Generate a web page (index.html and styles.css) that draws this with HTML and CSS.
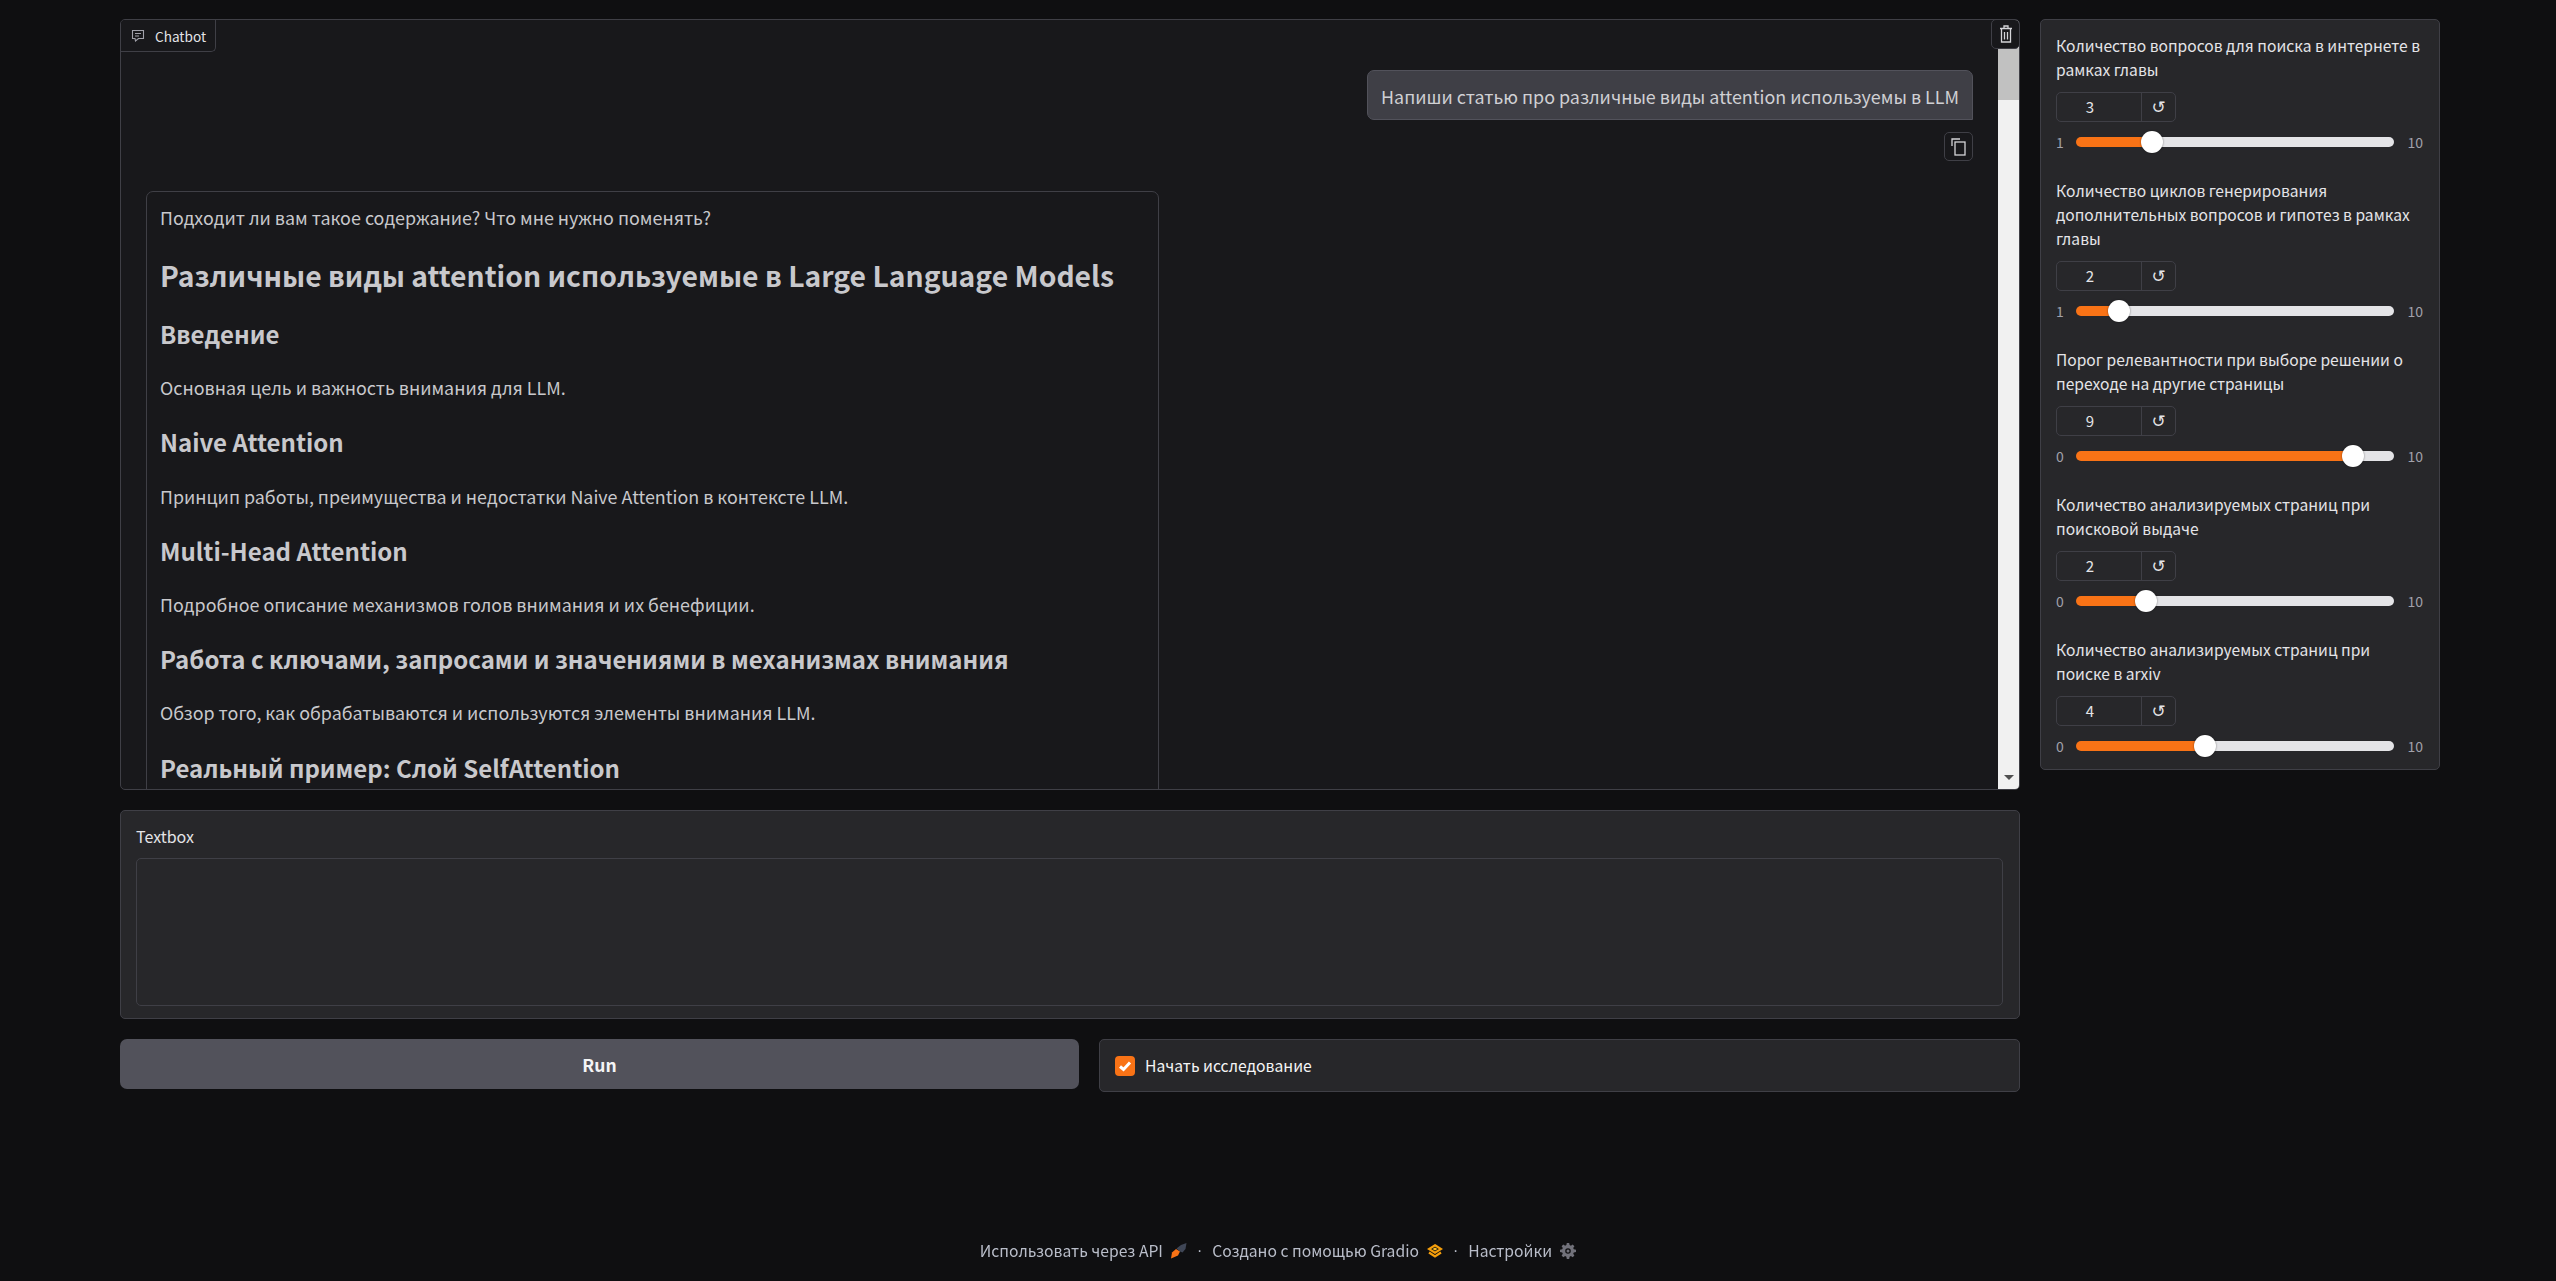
FILE: index.html
```html
<!doctype html>
<html lang="ru">
    <head>
        <meta charset="utf-8" />
        <meta name="viewport" content="width=device-width, initial-scale=1.0">
        <link rel="stylesheet" href="styles.css">
        <title>Gradio</title>
    </head>
    <body>
        <main class="app">
            <div class="left">
                <section class="chatbot">
                    <div class="chat-label">
                        <svg class="chat-icon" viewBox="0 0 14 14" fill="none" stroke="currentColor" stroke-width="1.1"><path d="M1.5 1.5h11v8h-5l-3 2.5-.5-2.500h-2.500z"/><path d="M4 4.500h6M4 7h4"/></svg>
                        <span>Chatbot</span>
                    </div>
                    <button class="icon-btn trash">
                        <svg viewBox="0 0 14 20" fill="none" stroke="currentColor" stroke-width="1.300"><path d="M1 4.500h12M5 4V2h4v2M2.500 5v13h9V5M5.500 8v7.500M8.500 8v7.500"/></svg>
                    </button>
                    <div class="chat-scroll">
                        <div class="user-row">
                            <div class="bubble">Напиши статью про различные виды attention используемы в LLM</div>
                        </div>
                        <div class="copy-row">
                            <button class="icon-btn copy">
                                <svg viewBox="0 0 16 18" fill="none" stroke="currentColor" stroke-width="1.300"><path d="M1 8V1h8"/><rect x="4" y="4" width="10" height="13"/></svg>
                            </button>
                        </div>
                        <article class="answer">
                            <p>Подходит ли вам такое содержание? Что мне нужно поменять?</p>
                            <h1>Различные виды attention используемые в Large Language Models</h1>
                            <h2>Введение</h2>
                            <p>Основная цель и важность внимания для LLM.</p>
                            <h2>Naive Attention</h2>
                            <p>Принцип работы, преимущества и недостатки Naive Attention в контексте LLM.</p>
                            <h2>Multi-Head Attention</h2>
                            <p>Подробное описание механизмов голов внимания и их бенефиции.</p>
                            <h2>Работа с ключами, запросами и значениями в механизмах внимания</h2>
                            <p>Обзор того, как обрабатываются и используются элементы внимания LLM.</p>
                            <h2>Реальный пример: Слой SelfAttention</h2>
                        </article>
                    </div>
                    <div class="scrollbar">
                        <div class="scroll-thumb"></div>
                        <div class="scroll-arrow"></div>
                    </div>
                </section>

                <section class="textbox">
                    <div class="field-label">Textbox</div>
                    <div class="textarea"></div>
                </section>

                <div class="actions">
                    <button class="run">Run</button>
                    <label class="check">
                        <span class="check-box">
                            <svg viewBox="0 0 20 20" fill="none" stroke="#fff" stroke-width="3"><path d="M5 10.500l3.500 3L15 6.500"/></svg>
                        </span>
                        <span>Начать исследование</span>
                    </label>
                </div>
            </div>

            <aside class="sliders">
                <div class="slider-block">
                    <div class="field-label">Количество вопросов для поиска в интернете в рамках главы</div>
                    <div class="number"><span class="value">3</span><span class="reset">↺</span></div>
                    <div class="range-row"><span>1</span><input type="range" min="1" max="10" value="3" style="--fill: 24%"><span>10</span></div>
                </div>
                <div class="slider-block">
                    <div class="field-label">Количество циклов генерирования дополнительных вопросов и гипотез в рамках главы</div>
                    <div class="number"><span class="value">2</span><span class="reset">↺</span></div>
                    <div class="range-row"><span>1</span><input type="range" min="1" max="10" value="2" style="--fill: 14%"><span>10</span></div>
                </div>
                <div class="slider-block">
                    <div class="field-label">Порог релевантности при выборе решении о переходе на другие страницы</div>
                    <div class="number"><span class="value">9</span><span class="reset">↺</span></div>
                    <div class="range-row"><span>0</span><input type="range" min="0" max="10" value="9" style="--fill: 87%"><span>10</span></div>
                </div>
                <div class="slider-block">
                    <div class="field-label">Количество анализируемых страниц при поисковой выдаче</div>
                    <div class="number"><span class="value">2</span><span class="reset">↺</span></div>
                    <div class="range-row"><span>0</span><input type="range" min="0" max="10" value="2" style="--fill: 22%"><span>10</span></div>
                </div>
                <div class="slider-block">
                    <div class="field-label">Количество анализируемых страниц при поиске в arxiv</div>
                    <div class="number"><span class="value">4</span><span class="reset">↺</span></div>
                    <div class="range-row"><span>0</span><input type="range" min="0" max="10" value="4" style="--fill: 40%"><span>10</span></div>
                </div>
            </aside>
        </main>

        <footer class="footer">
            <a>Использовать через API</a>
            <svg class="foot-icon" viewBox="0 0 16 16"><path d="M0 15.500l1-6L5 6l4 2.500-2 4z" fill="#f97316"/><path d="M5.500 5.500L10 2l5.500-2-1 6-3 3.500-2.500-1z" fill="#3f4656"/></svg>
            <span class="dot">·</span>
            <a>Создано с помощью Gradio</a>
            <svg class="foot-icon" viewBox="0 0 16 14" fill="none" stroke="#f59e0b" stroke-width="2.200"><path d="M8 1.200l6 3.800L8 8.800 2 5z"/><path d="M2 8.500L8 12.500l6-4"/><path d="M5.500 5L8 3.500 10.500 5 8 6.500z" fill="#fbbf24" stroke="none"/></svg>
            <span class="dot">·</span>
            <a>Настройки</a>
            <svg class="foot-icon" viewBox="0 0 16 16" fill="#71717a"><path fill-rule="evenodd" d="M6.800 0h2.400l.4 2.100 1.300.6 1.800-1.200 1.700 1.700-1.200 1.800.6 1.300 2.200.4v2.400l-2.200.4-.6 1.300 1.200 1.800-1.700 1.700-1.800-1.200-1.300.6-.4 2.200H6.800l-.4-2.200-1.300-.6-1.800 1.200-1.700-1.700 1.200-1.800-.6-1.300L0 9.100V6.700l2.200-.4.6-1.300-1.200-1.800 1.700-1.700 1.800 1.200 1.300-.6zM8 5.200a2.800 2.800 0 1 0 0 5.600 2.800 2.800 0 0 0 0-5.600z"/><circle cx="8" cy="8" r="1.500"/></svg>
        </footer>
    </body>
</html>
```

FILE: styles.css
```css
* {
    box-sizing: border-box;
    margin: 0;
}
html, body {
    height: 100%;
}
body {
    color: #e4e4e7;
    font-family: "Noto Sans CJK SC", "Noto Sans", sans-serif;
    font-size: 16px;
    line-height: 24px;
    background-color: #0f0f11;
    overflow: hidden;
}
button {
    font-family: inherit;
    color: inherit;
}

/* Main columns */
.app {
    display: flex;
    gap: 20px;
    width: 2322px;
    margin-left: 120px;
    padding-top: 19px;
    align-items: flex-start;
}
.left {
    width: 1900px;
    display: flex;
    flex-direction: column;
    gap: 20px;
}

/* Chatbot */
.chatbot {
    position: relative;
    height: 771px;
    display: flex;
    background-color: #18181b;
    border: 1px solid #3f3f46;
    border-radius: 5px;
    overflow: hidden;
}
.chat-label {
    position: absolute;
    top: 0;
    left: 0;
    z-index: 2;
    height: 32px;
    display: flex;
    align-items: center;
    gap: 10px;
    padding: 0 9px 0 10px;
    font-size: 13.6px;
    background-color: #18181b;
    border-right: 1px solid #3f3f46;
    border-bottom: 1px solid #3f3f46;
    border-bottom-right-radius: 5px;
}
.chat-icon {
    width: 14px;
    height: 14px;
    color: #a1a1aa;
}
.icon-btn {
    display: flex;
    align-items: center;
    justify-content: center;
    padding: 0;
    color: #d4d4d8;
    background-color: #18181b;
    border: 1px solid #3f3f46;
    border-radius: 5px;
}
.trash {
    position: absolute;
    top: -1px;
    right: -1px;
    z-index: 2;
    width: 29px;
    height: 30px;
}
.trash svg {
    width: 14px;
    height: 20px;
}
.chat-scroll {
    flex: 1;
    min-width: 0;
    height: 100%;
    overflow: hidden;
    padding: 50px 25px 0 26px;
}
.user-row, .copy-row {
    display: flex;
    justify-content: flex-end;
}
.bubble {
    height: 50px;
    padding: 13px 13px 11px;
    font-size: 17.9px;
    color: #d0d0d4;
    white-space: nowrap;
    background-color: #3f3f46;
    border: 1px solid #52525b;
    border-radius: 7px 7px 0 7px;
}
.copy-row {
    margin-top: 12px;
}
.copy {
    width: 29px;
    height: 29px;
}
.copy svg {
    width: 16px;
    height: 18px;
}
.answer {
    width: 1013px;
    margin-top: 30px;
    margin-left: -1px;
    padding: 12px 13px 60px;
    color: #c8c8cc;
    border: 1px solid #3f3f46;
    border-radius: 7px 7px 0 0;
}
.answer p {
    font-size: 17.9px;
    line-height: 26px;
}
.answer h1 {
    margin-top: 26px;
    font-size: 28.3px;
    line-height: 38px;
    font-weight: 600;
}
.answer h2 {
    margin-top: 27.2px;
    font-size: 24px;
    line-height: 30px;
    font-weight: 600;
}
.answer h2 + p {
    margin-top: 25.2px;
}
.answer h1 + h2 {
    margin-top: 25px;
}
.scrollbar {
    width: 21px;
    height: 100%;
    padding-top: 28px;
    display: flex;
    flex-direction: column;
    justify-content: space-between;
    align-items: center;
    background-color: #f1f1f1;
}
.scroll-thumb {
    width: 100%;
    height: 52px;
    background-color: #c1c1c1;
}
.scroll-arrow {
    margin-bottom: 9px;
    border-top: 5px solid #505050;
    border-left: 5px solid transparent;
    border-right: 5px solid transparent;
}

/* Textbox */
.textbox {
    height: 209px;
    padding: 13px 16px 0 15px;
    background-color: #27272a;
    border: 1px solid #3f3f46;
    border-radius: 5px;
}
.field-label {
    font-size: 15.6px;
    color: #e4e4e7;
}
.textbox .field-label {
    font-size: 16px;
}
.textarea {
    height: 148px;
    margin-top: 10px;
    background-color: #27272a;
    border: 1px solid #3f3f46;
    border-radius: 5px;
}

/* Run and checkbox */
.actions {
    display: flex;
    gap: 20px;
}
.run {
    width: 959px;
    height: 50px;
    font-size: 17.5px;
    font-weight: 600;
    color: #f4f4f5;
    background-color: #52525b;
    border: none;
    border-radius: 7px;
}
.check {
    flex: 1;
    height: 53px;
    display: flex;
    align-items: center;
    gap: 10px;
    padding-left: 15px;
    font-size: 15.7px;
    color: #f4f4f5;
    background-color: #27272a;
    border: 1px solid #3f3f46;
    border-radius: 5px;
}
.check-box {
    width: 20px;
    height: 20px;
    display: flex;
    background-color: #f97316;
    border-radius: 4px;
}

/* Sliders */
.sliders {
    width: 400px;
    padding: 13px 16px 0 15px;
    height: 751px;
    background-color: #27272a;
    border: 1px solid #3f3f46;
    border-radius: 5px;
}
.slider-block {
    padding-bottom: 24px;
}
.number {
    width: 120px;
    height: 30px;
    margin-top: 11px;
    display: flex;
    align-items: center;
    font-size: 15px;
    color: #e4e4e7;
    border: 1px solid #3f3f46;
    border-radius: 5px;
}
.value {
    width: 85px;
    padding-right: 18px;
    text-align: center;
    line-height: 28px;
    border-right: 1px solid #3f3f46;
}
.reset {
    flex: 1;
    text-align: center;
    font-family: "DejaVu Sans", sans-serif;
    font-size: 17px;
}
.range-row {
    height: 24px;
    margin-top: 8px;
    display: flex;
    align-items: center;
    justify-content: space-between;
    font-size: 14px;
    color: #a1a1aa;
}
input[type="range"] {
    -webkit-appearance: none;
    appearance: none;
    width: 318px;
    height: 10px;
    margin: 0 2px 0 0;
    border-radius: 5px;
    background: linear-gradient(to right, #f97316 var(--fill), #e4e4e7 var(--fill));
}
input[type="range"]::-webkit-slider-thumb {
    -webkit-appearance: none;
    width: 22px;
    height: 22px;
    border-radius: 50%;
    background-color: #fff;
    box-shadow: 0 0 2px rgba(0, 0, 0, 0.5);
}

/* Footer */
.footer {
    position: fixed;
    left: 0;
    right: 0;
    bottom: 18px;
    display: flex;
    justify-content: center;
    align-items: center;
    gap: 8px;
    font-size: 15.7px;
    color: #b9bdc9;
}
.foot-icon {
    width: 16px;
    height: 16px;
}
.dot {
    margin: 0 2px;
    font-family: "Liberation Sans", sans-serif;
}
```
